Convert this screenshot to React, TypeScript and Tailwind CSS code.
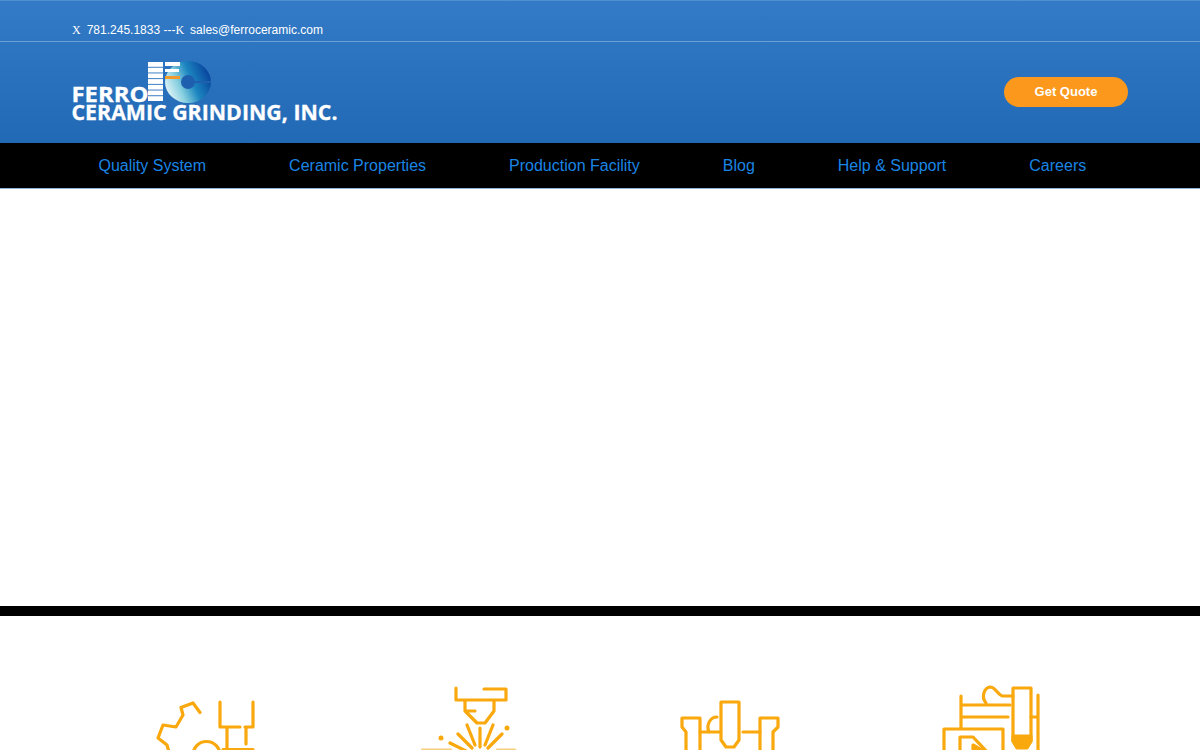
const navItems = ["Quality System", "Ceramic Properties", "Production Facility", "Blog", "Help & Support", "Careers"];

function Logo() {
  const bars = [62, 67.7, 73.4, 79.1, 84.8, 90.500, 96.2];
  return (
    <svg width="270" height="66" viewBox="70 60 270 66" className="block overflow-visible">
      <defs>
        <linearGradient id="disc" x1="0" y1="0.75" x2="1" y2="0.35">
          <stop offset="0" stopColor="#eef9fa" />
          <stop offset="0.32" stopColor="#86cfdf" />
          <stop offset="0.6" stopColor="#1c86c0" />
          <stop offset="1" stopColor="#07429c" />
        </linearGradient>
      </defs>
      <ellipse cx="188" cy="82" rx="23" ry="21" fill="url(#disc)" />
      <circle cx="188" cy="82" r="7" fill="#1f5fb0" />
      <rect x="188" y="81" width="23" height="2" fill="#1f5fb0" />
      {bars.map((y) => (
        <rect key={y} x="148" y={y} width="15" height="4.8" fill="#fff" />
      ))}
      <rect x="165" y="62" width="15" height="4" fill="#fff" />
      <rect x="165" y="69" width="14" height="3" fill="#fff" />
      <rect x="165" y="76" width="15" height="3" fill="#f39a2c" />
      <text x="71.5" y="102" fontFamily="'Open Sans', sans-serif" fontWeight="700" fontSize="21.5" fill="#fff" stroke="#fff" strokeWidth="0.3" textLength="77" lengthAdjust="spacingAndGlyphs">FERRO</text>
      <text x="71.5" y="120" fontFamily="'Open Sans', sans-serif" fontWeight="700" fontSize="21.5" fill="#fff" stroke="#fff" strokeWidth="0.3" textLength="266" lengthAdjust="spacingAndGlyphs">CERAMIC GRINDING, INC.</text>
    </svg>
  );
}

function IconBox({ x, children }: { x: number; children: React.ReactNode }) {
  return (
    <svg width="110" height="70" viewBox={`${x} 680 110 70`} fill="none" stroke="#f9a80d" strokeWidth="3.2" strokeLinecap="round" strokeLinejoin="round" className="block">
      {children}
    </svg>
  );
}

function GearIcon() {
  return (
    <IconBox x={151}>
      <path d="M200 712.5 193 703 181 707.500 183 715 176 727 163 725 158 738 167 745 169 752" />
      <path d="M220 702V727H240M253 702V727H245M227 727V750M246 727V744" />
      <path d="M193 755a13.500 13.500 0 0 1 27 0" />
      <path d="M223 749.500H253" />
    </IconBox>
  );
}

function LaserIcon() {
  return (
    <IconBox x={413}>
      <path d="M456 688V700H506V689H484" />
      <path d="M465 701V711L477 723H485L494 711V701M465 711H475" />
      <path d="M480 728V747M467 725 475 745M493 725 485 745M458 734 472 748M502 734 488 748M450 743 470 753" />
      <circle cx="441" cy="738" r="2.5" fill="#f9a80d" stroke="none" />
      <circle cx="507" cy="728" r="2.5" fill="#f9a80d" stroke="none" />
      <path d="M422 749.500H451M497 749.500H515" stroke="#f5cf7e" strokeWidth="2" />
    </IconBox>
  );
}

function MillIcon() {
  return (
    <IconBox x={675}>
      <path d="M721 702H739V740L734 747H726L721 740Z" />
      <path d="M700 752V718H682V727L686 732V752" />
      <path d="M760 752V718H778V727L773 732V752" />
      <path d="M717 717C710 717 706 725 709 732M700 732H720M743 732H760" />
    </IconBox>
  );
}

function DraftIcon() {
  return (
    <IconBox x={937}>
      <path d="M1013 688H1031V741L1027 747H1017L1013 741Z" />
      <path d="M1013 736H1031V741L1027 748H1017L1013 741Z" fill="#f9a80d" />
      <path d="M961 696V728M1038 695V752M962 705H1010M962 717H1008M1031 717H1038" />
      <path d="M986 703C981 697 984 688 990 687C996 687 998 696 1003 696H1013" />
      <path d="M944 752V729H1003V752" />
      <path d="M960 752V737H973L990 755" />
      <path d="M973 745 985 752H973Z" fill="#f9a80d" />
    </IconBox>
  );
}

export default function App() {
  return (
    <div className="h-[750px] w-[1200px] overflow-hidden bg-white font-['Liberation_Sans',Arial,sans-serif]">
      <header className="bg-gradient-to-b from-[#347bc7] to-[#2169b5]">
        <div className="flex h-[42px] items-end border-t border-b border-t-[#4f8fd2] border-b-[#6a9ed6] pb-[4px] pl-[72px] text-[12px] leading-[14px] text-white">
          <span className="font-['Liberation_Serif',serif]">X</span>
          <span className="ml-[6px]">781.245.1833 ---</span>
          <span className="font-['Liberation_Serif',serif]">K</span>
          <span className="ml-[6px]">sales@ferroceramic.com</span>
        </div>
        <div className="flex h-[101px] items-center justify-between pr-[72px] pb-[1px] pl-[70px]">
          <div className="pt-[2px]">
            <Logo />
          </div>
          <a className="flex h-[30px] w-[124px] items-center justify-center rounded-full bg-[#fc981c] text-[13px] font-bold text-white">
            Get Quote
          </a>
        </div>
      </header>
      <nav className="flex h-[46px] items-center gap-[83px] border-b border-b-[#8fb4da] bg-black pl-[98.500px] text-[16px] text-[#1a85e4]">
        {navItems.map((item) => (
          <a key={item} className="whitespace-nowrap">
            {item}
          </a>
        ))}
      </nav>
      <div className="h-[417px] bg-white" />
      <div className="h-[10px] bg-black" />
      <section className="grid grid-cols-[repeat(4,262px)] pt-[64px] pl-[75px]">
        <div className="flex justify-center"><GearIcon /></div>
        <div className="flex justify-center"><LaserIcon /></div>
        <div className="flex justify-center"><MillIcon /></div>
        <div className="flex justify-center"><DraftIcon /></div>
      </section>
    </div>
  );
}
